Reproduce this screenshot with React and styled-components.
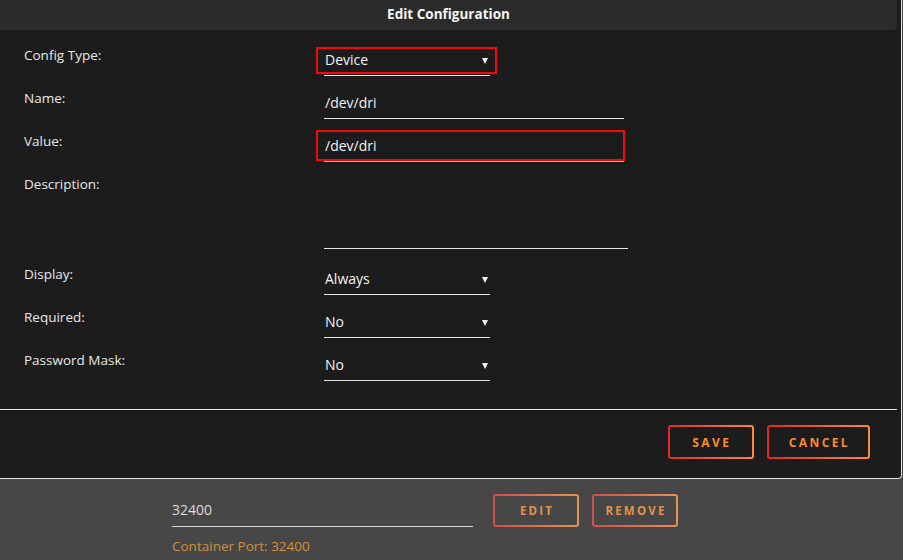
import styled, { createGlobalStyle } from "styled-components"

const GlobalStyle = createGlobalStyle`
  html, body {
    margin: 0;
    padding: 0;
    background: #474747;
    font-family: "Open Sans", "Noto Sans", sans-serif;
    overflow: hidden;
  }
`

const rows = [
  { label: "Config Type:", value: "Device", select: true, hl: { top: 2, right: -7, bottom: 1, left: -8 } },
  { label: "Name:", value: "/dev/dri" },
  { label: "Value:", value: "/dev/dri", hl: { top: -1, right: -1, bottom: 0, left: -8 } },
  { label: "Description:", value: "", area: true },
  { label: "Display:", value: "Always", select: true },
  { label: "Required:", value: "No", select: true },
  { label: "Password Mask:", value: "No", select: true },
]

const App = () => {
  return (
    <>
      <GlobalStyle />
      <Modal>
        <TitleBar>Edit Configuration</TitleBar>
        <Body>
          {rows.map((r, i) => (
            <Row key={i} $area={r.area}>
              <Label>{r.label}</Label>
              <Field $select={r.select} $area={r.area} $hl={r.hl}>
                {r.value}
              </Field>
            </Row>
          ))}
        </Body>
        <Footer>
          <Button>SAVE</Button>
          <Button>CANCEL</Button>
        </Footer>
      </Modal>
      <PageRow>
        <PortInput>32400</PortInput>
        <PageButton>EDIT</PageButton>
        <PageButton>REMOVE</PageButton>
      </PageRow>
      <PortHint>Container Port: 32400</PortHint>
    </>
  )
}

const Modal = styled.div`
    width: 902px;
    box-sizing: border-box;
    background: #1c1c1c;
    border-right: 1px solid #e4e4e4;
    border-bottom: 1px solid #e4e4e4;
    border-bottom-right-radius: 4px;
    padding-right: 4px;
  `

const TitleBar = styled.div`
    height: 30px;
    line-height: 29px;
    background: #2b2b2b;
    border-bottom-right-radius: 3px;
    color: #f4f4f4;
    font-weight: 700;
    font-size: 13.5px;
    text-align: center;
  `

const Body = styled.div`
    height: 380px;
    box-sizing: border-box;
    padding: 15px 0 0 24px;
    border-bottom: 1px solid #e4e4e4;
  `

const Row = styled.div`
    display: flex;
    align-items: flex-start;
    margin-bottom: ${(p) => (p.$area ? "15px" : "12px")};
  `

const Label = styled.div`
    width: 300px;
    line-height: 20px;
    font-size: 13.5px;
    color: #e8e8e8;
  `

const Field = styled.div`
    position: relative;
    box-sizing: border-box;
    width: ${(p) => (p.$select ? "166px" : p.$area ? "304px" : "300px")};
    height: ${(p) => (p.$area ? "75px" : "31px")};
    padding: 5px 0 0 1px;
    line-height: 20px;
    font-size: 14px;
    color: #f2f2f2;
    border-bottom: 1px solid #e4e4e4;

    &::after {
      content: "";
      display: ${(p) => (p.$select ? "block" : "none")};
      position: absolute;
      right: 2px;
      top: 13px;
      border-left: 3px solid transparent;
      border-right: 3px solid transparent;
      border-top: 6px solid #f2f2f2;
    }

    &::before {
      content: "";
      display: ${(p) => (p.$hl ? "block" : "none")};
      position: absolute;
      top: ${(p) => (p.$hl ? p.$hl.top : 0)}px;
      right: ${(p) => (p.$hl ? p.$hl.right : 0)}px;
      bottom: ${(p) => (p.$hl ? p.$hl.bottom : 0)}px;
      left: ${(p) => (p.$hl ? p.$hl.left : 0)}px;
      border: 2px solid #f00a0a;
      box-shadow: 0 0 1px #8a0000;
    }
  `

const Footer = styled.div`
    display: flex;
    justify-content: flex-end;
    gap: 13px;
    padding: 15px 27px 19px 0;
  `

const Button = styled.button`
    height: 34px;
    min-width: 86px;
    padding: 0 18px 0 20px;
    border: 2px solid transparent;
    border-radius: 3px;
    background: linear-gradient(#1c1c1c, #1c1c1c) padding-box,
      linear-gradient(90deg, #e22828, #ff8c2f) border-box;
    color: #fb8a2e;
    font-family: "Open Sans", "Noto Sans", sans-serif;
    font-weight: 700;
    font-size: 12px;
    letter-spacing: 2.4px;
    cursor: pointer;
  `

const PageRow = styled.div`
    display: flex;
    align-items: flex-start;
    gap: 13px;
    padding: 15px 0 0 172px;
  `

const PortInput = styled.div`
    width: 301px;
    height: 33px;
    box-sizing: border-box;
    padding-top: 6px;
    margin-right: 7px;
    line-height: 20px;
    font-size: 14px;
    color: #dcdcdc;
    border-bottom: 1px solid #d8d8d8;
  `

const PageButton = styled.button`
    width: 86px;
    height: 33px;
    border: 2px solid transparent;
    border-radius: 3px;
    background: linear-gradient(#474747, #474747) padding-box,
      linear-gradient(90deg, #d24e4a, #e9924f) border-box;
    color: #e29150;
    font-family: "Open Sans", "Noto Sans", sans-serif;
    font-weight: 700;
    font-size: 11.5px;
    letter-spacing: 2.2px;
    padding: 0 0 0 2px;
  `

const PortHint = styled.div`
    padding: 9px 0 0 172px;
    line-height: 20px;
    font-size: 13.5px;
    color: #d0913a;
  `

export default App
